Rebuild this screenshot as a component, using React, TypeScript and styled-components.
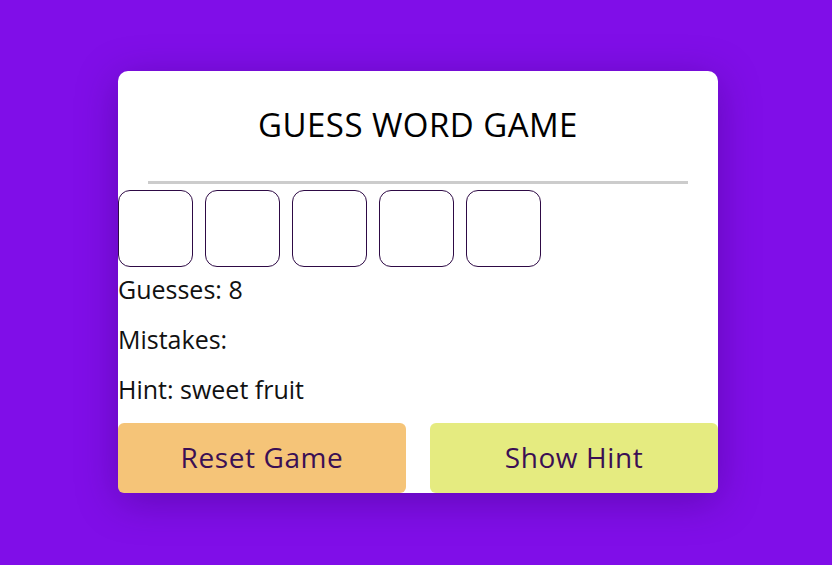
import React from "react";
import styled, { createGlobalStyle } from "styled-components";

const Global = createGlobalStyle`
  html, body { margin: 0; padding: 0; }
  body {
    background: #800ee8;
    font-family: "Open Sans", "DejaVu Sans", sans-serif;
    width: 832px;
    height: 565px;
    overflow: hidden;
  }
`;

const Page = styled.main`
  width: 832px;
  height: 565px;
  display: flex;
  justify-content: center;
  padding: 71px 0 0 4px;
  box-sizing: border-box;
`;

const Card = styled.section`
  width: 600px;
  height: 422px;
  background: #ffffff;
  border-radius: 10px;
  box-shadow: 0 8px 40px rgba(40, 0, 90, 0.35);
  display: flex;
  flex-direction: column;
`;

const Title = styled.h1`
  margin: 0;
  padding-top: 34px;
  height: 75px;
  box-sizing: border-box;
  text-align: center;
  font-size: 33px;
  font-weight: 400;
  line-height: 40px;
  color: #000;
  letter-spacing: 0.45px;
`;

const Rule = styled.hr`
  width: 540px;
  margin: 35px auto 0;
  border: none;
  height: 3px;
  background: #cccccc;
`;

const Slots = styled.div`
  display: flex;
  gap: 12px;
  margin-top: 6px;
`;

const Slot = styled.div`
  width: 75px;
  height: 77px;
  box-sizing: border-box;
  border: 1px solid #2e0a45;
  border-radius: 12px;
`;

const Stat = styled.p<{ $first?: boolean }>`
  margin: 0;
  margin-top: ${(p) => (p.$first ? "7px" : "20px")};
  font-size: 25px;
  line-height: 30px;
  color: #111;
`;

const Actions = styled.div`
  display: flex;
  gap: 24px;
  margin-top: 19px;
`;

const Button = styled.button<{ $bg: string }>`
  flex: 1;
  height: 70px;
  padding: 0 0 3px;
  border: none;
  border-radius: 6px;
  background: ${(p) => p.$bg};
  color: #3b0f54;
  font-family: inherit;
  font-size: 28px;
  letter-spacing: 0.6px;
  cursor: pointer;
`;

export default function App() {
  return (
    <>
      <Global />
      <Page>
        <Card>
          <Title>GUESS WORD GAME</Title>
          <Rule />
          <Slots>
            {[0, 1, 2, 3, 4].map((i) => (
              <Slot key={i} />
            ))}
          </Slots>
          <Stat $first>Guesses: 8</Stat>
          <Stat>Mistakes:</Stat>
          <Stat>Hint: sweet fruit</Stat>
          <Actions>
            <Button $bg="#f5c478">Reset Game</Button>
            <Button $bg="#e5eb80">Show Hint</Button>
          </Actions>
        </Card>
      </Page>
    </>
  );
}
